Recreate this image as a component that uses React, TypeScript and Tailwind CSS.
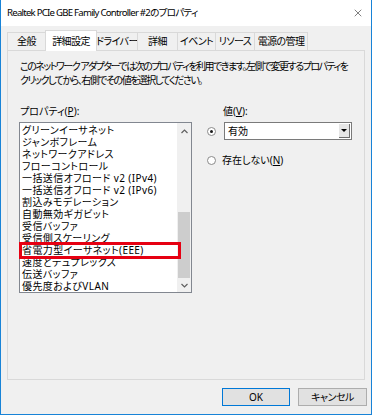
import { X } from 'lucide-react'

const tabs = [
  { label: '全般', w: 'w-[39px]' },
  { label: '詳細設定', w: 'w-[52px]', active: true },
  { label: 'ドライバー', w: 'w-[42px]' },
  { label: '詳細', w: 'w-[41px]' },
  { label: 'イベント', w: 'w-[39px]' },
  { label: 'リソース', w: 'w-[40px]' },
  { label: '電源の管理', w: 'w-[54px]' },
]

const properties = [
  'グリーンイーサネット',
  'ジャンボフレーム',
  'ネットワークアドレス',
  'フローコントロール',
  '一括送信オフロード v2 (IPv4)',
  '一括送信オフロード v2 (IPv6)',
  '割込みモデレーション',
  '自動無効ギガビット',
  '受信バッファ',
  '受信側スケーリング',
  '省電力型イーサネット(EEE)',
  '速度とデュプレックス',
  '伝送バッファ',
  '優先度およびVLAN',
]

function Radio({ checked }: { checked?: boolean }) {
  return (
    <span className="w-[9px] h-[9px] rounded-full border border-[#8a8a8a] bg-white flex items-center justify-center shrink-0">
      {checked && <span className="w-[3px] h-[3px] rounded-full bg-[#1a1a1a]" />}
    </span>
  )
}

export default function App() {
  return (
    <div className="w-[372px] h-[415px] bg-[#f0f0f0] border-x border-b border-[#1883d7] flex flex-col text-[10px] text-black font-['Noto_Sans','Noto_Sans_CJK_JP',sans-serif] [font-feature-settings:'palt']">
      {/* Title bar */}
      <div className="h-[26px] bg-white flex items-center justify-between pl-[6px] pr-[7px] shrink-0">
        <span className="text-[9.6px] tracking-[-0.75px] whitespace-nowrap">Realtek PCIe GBE Family Controller #2のプロパティ</span>
        <X className="w-[12px] h-[12px]" strokeWidth={1} />
      </div>

      {/* Tabs */}
      <div className="h-[24px] flex items-end pl-[6px] shrink-0">
        {tabs.map((t, i) => (
          <div
            key={t.label}
            className={`${t.w} ${i > 0 ? '-ml-px' : ''} flex items-center justify-center border border-b-0 border-[#d9d9d9] whitespace-nowrap tracking-[-0.6px] ${
              t.active ? 'relative z-10 h-[21px] -mb-px bg-white' : 'h-[18px] bg-[#f0f0f0]'
            }`}
          >
            {t.label}
          </div>
        ))}
      </div>

      {/* Panel */}
      <div className="mx-[6px] h-[330px] shrink-0 border border-[#d9d9d9] pt-[8px] pl-[12px] pr-[4px]">
        <p className="leading-[14px] tracking-[-1.5px] whitespace-nowrap">
          このネットワーク アダプターでは次のプロパティを利用できます。左側で変更するプロパティを
          <br />
          クリックしてから、右側でその値を選択してください。
        </p>

        <div className="mt-[18px] flex">
          {/* Property list */}
          <div className="w-[173px] -ml-px">
            <div className="pl-px leading-[12px]">
              プロパティ(<span className="underline">P</span>):
            </div>
            <div className="mt-[5px] h-[171px] border border-[#828790] bg-white flex relative">
              <div className="flex-1 pl-[2px] pt-px tracking-[0.4px]">
                {properties.map((p) => (
                  <div key={p} className="h-[12px] leading-[12px] whitespace-nowrap">
                    {p}
                  </div>
                ))}
              </div>
              <div className="w-[14px] bg-[#f0f0f0] flex flex-col">
                <div className="h-[17px] flex items-center justify-center">
                  <svg width="7" height="5" viewBox="0 0 7 5">
                    <path d="M0.5 4L3.5 1L6.5 4" fill="none" stroke="#606060" strokeWidth="1.2" />
                  </svg>
                </div>
                <div className="flex-1" />
                <div className="h-[66px] mx-px bg-[#cdcdcd]" />
                <div className="h-[14px] flex items-center justify-center">
                  <svg width="7" height="5" viewBox="0 0 7 5">
                    <path d="M0.5 1L3.5 4L6.5 1" fill="none" stroke="#606060" strokeWidth="1.2" />
                  </svg>
                </div>
              </div>
              <div className="absolute left-[-1px] top-[119px] w-[162px] h-[17px] border-[3px] border-[#e60012]" />
            </div>
          </div>

          {/* Value */}
          <div className="ml-[15px]">
            <div className="pl-[16px] leading-[12px]">
              値(<span className="underline">V</span>):
            </div>
            <div className="mt-[5px] flex items-center gap-[8px]">
              <Radio checked />
              <div className="w-[128px] h-[18px] border border-[#7a7a7a] bg-white flex items-center justify-between pl-[3px] pr-px">
                <span>有効</span>
                <div className="w-[11px] h-[14px] bg-[#e6e6e6] border-r border-b border-[#6d6d6d] flex items-center justify-center">
                  <svg width="6" height="3" viewBox="0 0 6 3">
                    <path d="M0 0H6L3 3Z" fill="#000" />
                  </svg>
                </div>
              </div>
            </div>
            <div className="mt-[14px] h-[12px] flex items-center gap-[6px]">
              <Radio />
              <span className="leading-[12px]">
                存在しない(<span className="underline">N</span>)
              </span>
            </div>
          </div>
        </div>
      </div>

      {/* Buttons */}
      <div className="mt-[8px] flex justify-end gap-[8px] pr-[4px]">
        <button className="w-[68px] h-[18px] bg-[#e1e1e1] border border-[#0078d7] leading-none">OK</button>
        <button className="w-[69px] h-[18px] bg-[#e1e1e1] border border-[#adadad] leading-none tracking-[-0.5px]">
          キャンセル
        </button>
      </div>
    </div>
  )
}
